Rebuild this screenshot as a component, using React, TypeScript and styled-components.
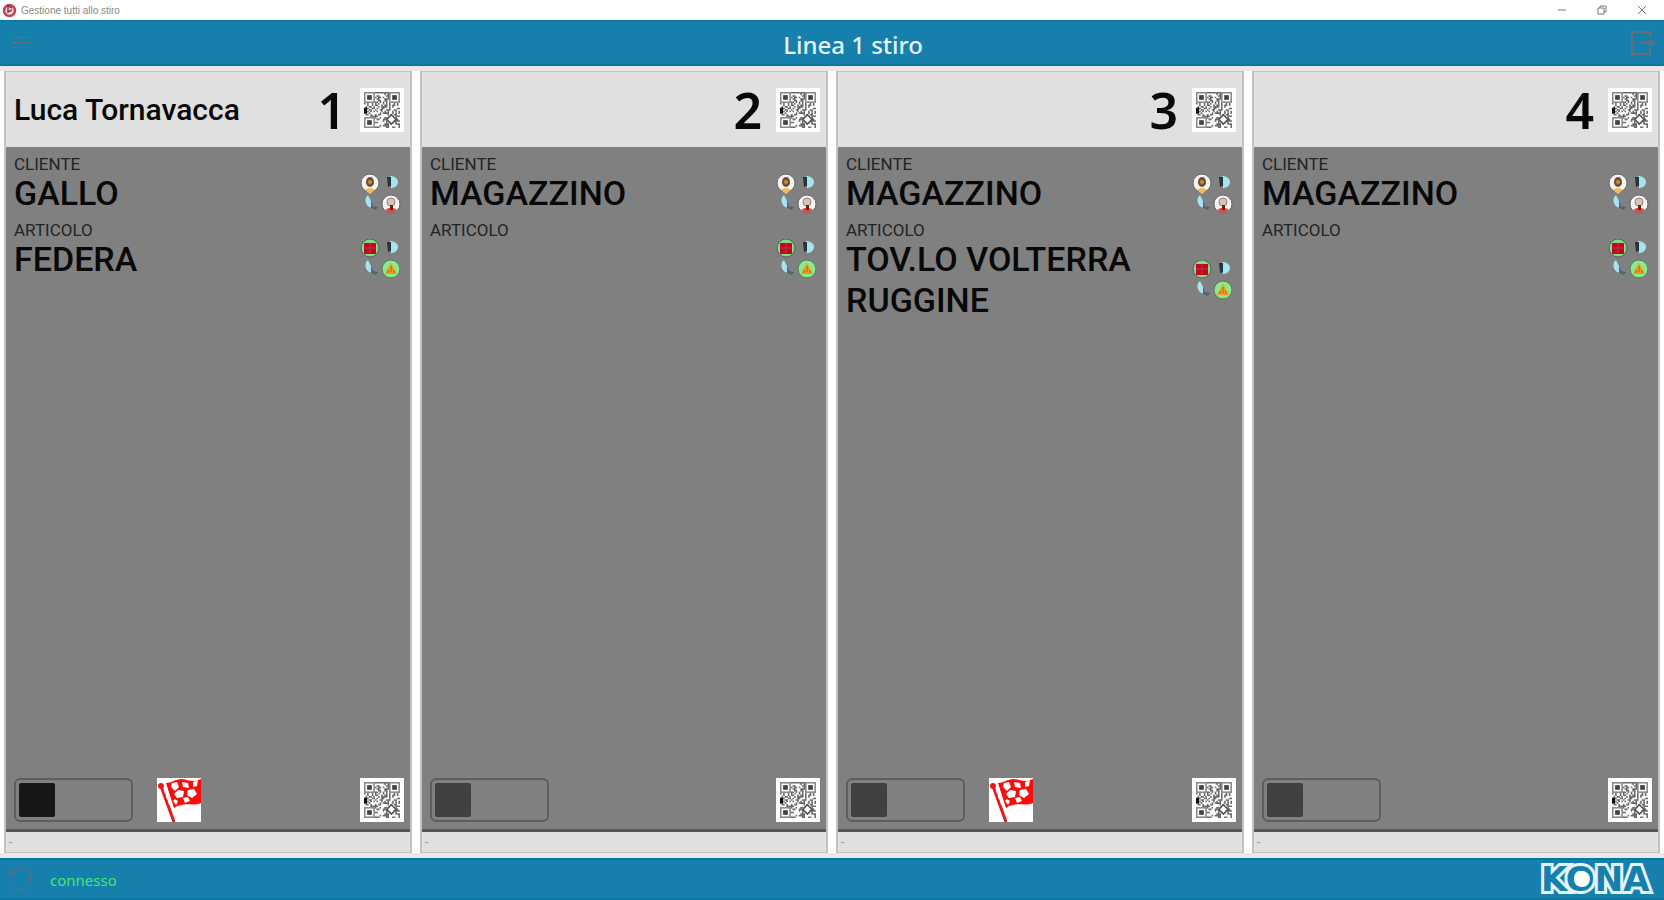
import React from 'react';
import styled, { createGlobalStyle } from 'styled-components';

const GlobalStyle = createGlobalStyle`
  *, *::before, *::after { box-sizing: border-box; }
  body { margin: 0; background: #fff; font-family: Roboto, "Liberation Sans", sans-serif; color: #080808; }
  button { padding: 0; border: 0; background: none; cursor: pointer; color: inherit; font: inherit; }
  svg { display: block; }
`;

const Window = styled.div`
  min-height: 100vh;
  display: flex;
  flex-direction: column;
`;

const TitleBar = styled.header`
  height: 20px;
  display: flex;
  align-items: center;
  gap: 4px;
  padding: 0 8px 0 2px;
  font-family: "Liberation Sans", sans-serif;
  font-size: 10px;
  color: #858b85;
`;

const WindowControls = styled.div`
  margin-left: auto;
  display: flex;
  gap: 12px;
`;

const WindowButton = styled.button`
  width: 28px;
  height: 16px;
  display: grid;
  place-items: center;
  color: #777;
`;

const AppBar = styled.div`
  height: 46px;
  display: grid;
  grid-template-columns: 84px 1fr 42px;
  align-items: center;
  background: #167fac;
  border-top: 2px solid #0a7ba6;
  border-bottom: 2px solid #0877a5;
`;

const AppTitle = styled.h1`
  margin: 0;
  padding-top: 4px;
  text-align: center;
  font-family: "Noto Sans", "Open Sans", sans-serif;
  font-size: 24px;
  line-height: 32px;
  font-weight: 500;
  color: #e4f4fb;
`;

const BarButton = styled.button`
  width: 42px;
  height: 40px;
  display: grid;
  place-items: center;
  color: #6a6c7a;
`;

const Board = styled.main`
  flex: 1;
  display: grid;
  grid-template-columns: repeat(4, minmax(0, 1fr));
  gap: 8px;
  padding: 0 4px;
  border-top: 5px solid #e8e8e8;
  border-bottom: 5px solid #e8e8e8;
`;

const Station = styled.section`
  display: flex;
  flex-direction: column;
  border: solid #c2c2c2;
  border-width: 1px 2px;
  background: #808080;
`;

const StationHeader = styled.header`
  height: 75px;
  display: flex;
  align-items: center;
  padding: 0 6px 0 8px;
  background: #e0e0e0;
`;

const Operator = styled.span`
  flex: 1;
  font-size: 30px;
  line-height: 40px;
  font-weight: 500;
`;

const StationNumber = styled.h2`
  margin: 0 14px 0 0;
  font-family: "Noto Sans", "Open Sans", sans-serif;
  font-size: 50px;
  line-height: 60px;
  font-weight: 600;
`;

const CodeButton = styled.button`
  width: 44px;
  height: 44px;
  display: grid;
  place-items: center;
  background: #fff;
`;

const Details = styled.dl`
  flex: 1;
  margin: 0;
  padding: 1px 8px;
`;

const Label = styled.dt`
  padding-top: 8px;
  font-size: 17px;
  line-height: 17px;
  color: #242424;
`;

const Value = styled.dd`
  margin: 0;
  min-height: 41px;
  display: flex;
  align-items: center;
  justify-content: space-between;
  gap: 32px;
  font-size: 34px;
  line-height: 41px;
  font-weight: 500;
`;

const SwapButton = styled.button`
  flex: none;
  width: 44px;
  height: 41px;
`;

const Actions = styled.div`
  display: flex;
  align-items: center;
  gap: 24px;
  padding: 0 6px 7px 8px;
  border-bottom: 3px solid #555;
`;

const Toggle = styled.input`
  appearance: none;
  width: 119px;
  height: 44px;
  margin: 0;
  padding: 3px;
  border: 2px solid #5d5d5d;
  border-radius: 6px;
  &::before {
    content: "";
    display: block;
    width: 36px;
    height: 34px;
    border-radius: 2px;
    background: #171717;
  }
  &:disabled::before { background: #414141; }
`;

const FlagButton = styled.button`
  width: 44px;
  height: 44px;
  background: #fff;
`;

const Spacer = styled.div`
  flex: 1;
`;

const StationStatus = styled.footer`
  height: 20px;
  padding-left: 3px;
  background: #e0e0e0;
  font-size: 12px;
  line-height: 20px;
  color: #999;
`;

const StatusBar = styled.footer`
  height: 42px;
  display: flex;
  align-items: center;
  padding-right: 4px;
  background: #167fac;
  border-top: 2px solid #0877a5;
  border-bottom: 2px solid #0a76a2;
`;

const Connection = styled.span`
  flex: 1;
  padding: 2px 0 0 8px;
  font-size: 15px;
  line-height: 20px;
  font-family: "Noto Sans", sans-serif;
  color: #45e86b;
`;

const inFinder = (x: number, y: number) =>
  (x < 7 && y < 7) || (x > 15 && y < 7) || (x < 7 && y > 15);

const modules: string[] = [];
for (let y = 0; y < 23; y++) {
  for (let x = 0; x < 23; x++) {
    if (inFinder(x, y) || (x > 14 && y > 14 && x < 20 && y < 20)) continue;
    if (((x * 37 + y * 61 + x * y * 17 + ((x ^ y) * 29)) % 11) < 5) modules.push(`M${x} ${y}h1v1h-1z`);
  }
}
const modulePath = modules.join('');

function CodeIcon() {
  return (
    <svg width="36" height="36" viewBox="0 0 23 23" aria-hidden="true">
      <path d={modulePath} fill="#6a6a6a" />
      {[[0, 0], [16, 0], [0, 16]].map(([x, y]) => (
        <g key={`${x}-${y}`}>
          <rect x={x + 0.5} y={y + 0.5} width="6" height="6" fill="none" stroke="#8a8a8a" />
          <rect x={x + 2} y={y + 2} width="3" height="3" fill="#444" />
        </g>
      ))}
      <path d="M17.5 14.5l3 3-3 3-3-3z" fill="none" stroke="#505050" />
      <rect x="0" y="10" width="2" height="3.6" fill="#111" />
    </svg>
  );
}

function SwapArrows() {
  return (
    <>
      <path d="M32 4c5 0 8 3 8 6s-3 6-7 6z" fill="#a5e4f2" />
      <path d="M29 5h4v9l-3 1z" fill="#26343b" />
      <path d="M10 23c-4 3-3 9 1 12l4 1-2-7z" fill="#a5e4f2" />
      <path d="M13 28l2 6 5 1-2 3-5-2" fill="#4d6870" />
    </>
  );
}

function CustomerIcon() {
  return (
    <svg width="44" height="41" viewBox="0 1 44 41" aria-hidden="true">
      <SwapArrows />
      <circle cx="12" cy="11" r="9" fill="#f4f4ee" stroke="#666" />
      <ellipse cx="12" cy="10" rx="4" ry="5" fill="#6d5030" />
      <circle cx="12" cy="10" r="2" fill="#c98b3c" />
      <path d="M7 18q5-4 10 0l-5 4z" fill="#efbd58" />
      <circle cx="33" cy="32" r="9" fill="#f4f4f4" stroke="#666" />
      <circle cx="33" cy="30" r="4" fill="#dac5bb" stroke="#858585" />
      <path d="M27 38q6-5 12 0-6 6-12 0z" fill="#e24849" />
      <path d="M32 33h3v5h-3z" fill="#7f1719" />
    </svg>
  );
}

function ArticleIcon() {
  return (
    <svg width="44" height="41" viewBox="0 2 44 41" aria-hidden="true">
      <SwapArrows />
      <circle cx="12" cy="11" r="9" fill="#85d98a" stroke="#4c684d" />
      <rect x="6" y="6" width="12" height="11" fill="#b90c22" />
      <path d="M12 6v11M6 11h12" stroke="#d32835" />
      <circle cx="33" cy="32" r="9" fill="#8ce78d" stroke="#5a785a" />
      <path d="M33 26l6 11H27z" fill="#ed9e19" />
      <path d="M33 29v6M30 36v-3M36 36v-3" stroke="#a36820" />
    </svg>
  );
}

function FlagIcon() {
  return (
    <svg width="44" height="44" viewBox="0 0 44 44" aria-hidden="true">
      <path d="M9 5C15 5 18 1 25 1c7 1 9 4 19 0v24c-9 4-16-2-27 5z" fill="#fb0b0b" />
      <path
        d="M15 5l5-1 2 5-4 4-4-4zM25 4l6 1 1 5-6-1zM21 12l6 1-1 6-6 1-3-4zM31 12l6-1 3 5-5 4-5-3zM26 20l5-1 2 4-5 2zM36 4l5-2-1 6-4 1zM18 21l3 2-2 4-3-4z"
        fill="#fff"
      />
      <path d="M4 8l13 36" stroke="#ef1515" strokeWidth="3" />
      <circle cx="4" cy="8" r="3" fill="#f01616" />
      <path d="M7 12l6 16" stroke="#fff" strokeWidth="1" strokeDasharray="4 2" />
    </svg>
  );
}

function BrandLogo() {
  return (
    <svg width="124" height="38" viewBox="0 0 124 38" role="img" aria-label="KONA">
      <text
        x="5"
        y="31"
        fontFamily="DejaVu Sans, sans-serif"
        fontWeight="700"
        fontSize="34"
        fill="#167fac"
        stroke="#e5f4fa"
        strokeWidth="6"
        paintOrder="stroke"
      >
        KONA
      </text>
      <circle cx="46" cy="19" r="8" fill="#fff" />
    </svg>
  );
}

interface StationData {
  number: number;
  operator?: string;
  customer: string;
  article?: string;
  active?: boolean;
  flagged?: boolean;
}

const stations: StationData[] = [
  { number: 1, operator: 'Luca Tornavacca', customer: 'GALLO', article: 'FEDERA', active: true, flagged: true },
  { number: 2, customer: 'MAGAZZINO' },
  { number: 3, customer: 'MAGAZZINO', article: 'TOV.LO VOLTERRA RUGGINE', flagged: true },
  { number: 4, customer: 'MAGAZZINO' },
];

function StationCard({ number, operator, customer, article, active, flagged }: StationData) {
  return (
    <Station>
      <StationHeader>
        <Operator>{operator}</Operator>
        <StationNumber>{number}</StationNumber>
        <CodeButton aria-label="Codice operatore"><CodeIcon /></CodeButton>
      </StationHeader>
      <Details>
        <Label>CLIENTE</Label>
        <Value>
          <span>{customer}</span>
          <SwapButton aria-label="Cambia cliente"><CustomerIcon /></SwapButton>
        </Value>
        <Label>ARTICOLO</Label>
        <Value>
          <span>{article}</span>
          <SwapButton aria-label="Cambia articolo"><ArticleIcon /></SwapButton>
        </Value>
      </Details>
      <Actions>
        <Toggle type="checkbox" role="switch" aria-label={`Postazione ${number}`} disabled={!active} />
        {flagged && <FlagButton aria-label="Fine lavoro"><FlagIcon /></FlagButton>}
        <Spacer />
        <CodeButton aria-label="Codice postazione"><CodeIcon /></CodeButton>
      </Actions>
      <StationStatus>-</StationStatus>
    </Station>
  );
}

export default function App() {
  return (
    <Window>
      <GlobalStyle />
      <TitleBar>
        <svg width="15" height="15" viewBox="0 0 15 15" aria-hidden="true">
          <circle cx="7.5" cy="7.5" r="5.5" fill="#f4d7dc" stroke="#b9465b" strokeWidth="2.5" />
          <path d="M6 3v6l4-2M5 2l5 3" fill="none" stroke="#a92b45" strokeWidth="1.5" />
        </svg>
        <span>Gestione tutti allo stiro</span>
        <WindowControls>
          <WindowButton aria-label="Riduci">
            <svg width="10" height="10" viewBox="0 0 10 10"><path d="M1 5h8" stroke="currentColor" /></svg>
          </WindowButton>
          <WindowButton aria-label="Ripristina">
            <svg width="10" height="10" viewBox="0 0 10 10" fill="none" stroke="currentColor">
              <path d="M1 3h6v6H1zM3 3V1h6v6H7" />
            </svg>
          </WindowButton>
          <WindowButton aria-label="Chiudi">
            <svg width="10" height="10" viewBox="0 0 10 10"><path d="M1 1l8 8M9 1l-8 8" stroke="currentColor" /></svg>
          </WindowButton>
        </WindowControls>
      </TitleBar>
      <AppBar>
        <BarButton aria-label="Menu">
          <svg width="18" height="14" viewBox="0 0 18 14"><path d="M0 1.5h18M0 6.5h18M0 11.5h18" stroke="currentColor" /></svg>
        </BarButton>
        <AppTitle>Linea 1 stiro</AppTitle>
        <BarButton aria-label="Esci">
          <svg width="24" height="24" viewBox="0 0 24 24" fill="none" stroke="currentColor" strokeWidth="2">
            <path d="M19 7V1H1v22h18v-6M8 12h14M19 9l3 3-3 3" />
          </svg>
        </BarButton>
      </AppBar>
      <Board>
        {stations.map((station) => <StationCard key={station.number} {...station} />)}
      </Board>
      <StatusBar>
        <BarButton aria-label="Aggiorna">
          <svg width="24" height="24" viewBox="0 0 24 24" fill="none" stroke="currentColor">
            <path d="M2 7c4-7 14-7 18-1s1 15-7 17C8 23 4 21 2 17M1 3l1 5 5-1" />
          </svg>
        </BarButton>
        <Connection>connesso</Connection>
        <BrandLogo />
      </StatusBar>
    </Window>
  );
}
